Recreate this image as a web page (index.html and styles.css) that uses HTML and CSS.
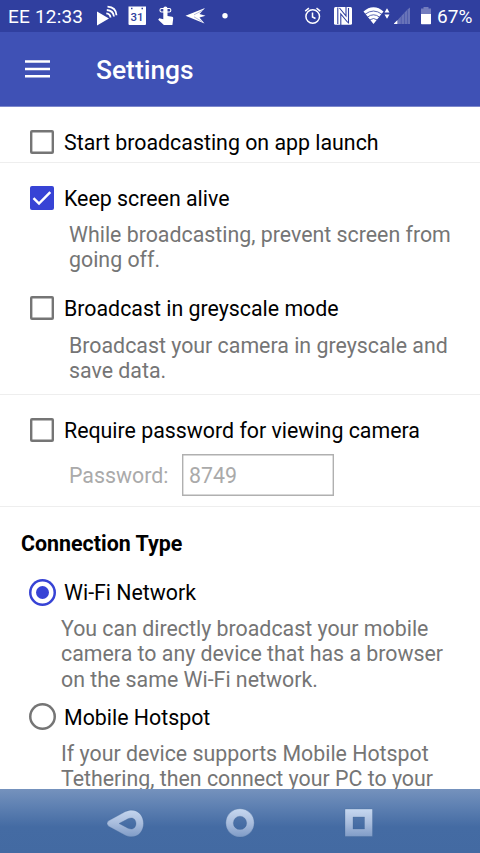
FILE: index.html
```html
<!DOCTYPE html>
<html lang="en">
<head>
<meta charset="utf-8">
<title>Settings</title>
<link rel="stylesheet" href="styles.css">
</head>
<body>
<div class="screen">
  <div class="status">
    <span class="clock">EE 12:33</span>
    <svg class="status-left" width="140" height="32" viewBox="92 0 140 32" fill="#fff">
      <path d="M97 11.500 109 18.500 97 25.500z"/>
      <g fill="none" stroke="#fff" stroke-width="1.800"><path d="M106.300 13.300q4 .5 4.200 4.200M106.800 10q6.500.5 7.200 6.500M107.500 6.700q8.500.5 9 8.500"/></g>
      <path d="M128.500 6.500H146v17.500q0 1-1 1h-15.500q-1 0-1-1z"/>
      <path fill="#303f9f" d="M131 7.800h1.500v1.500H131zM141.500 7.800h1.500v1.500h-1.500z"/>
      <text class="date" x="137" y="21.300" text-anchor="middle" fill="#303f9f">31</text>
      <path d="M163.300 8.500q0-2 2.100-2t2.100 2v7.500l4.700.8q1.200.3 1 1.700l-.8 6.500h-8.500l-5.700-5.300 1.100-1.500 4 1.100z"/>
      <rect x="160" y="8.500" width="10.800" height="3.500" rx="1.600" fill="none" stroke="#fff" stroke-width="1.100"/>
      <path d="M185.500 15.800 205 8l-5.500 6 6 1.800-6 1.800 5 6z"/>
      <path d="M194 14.800 203 10.200M194 16.800 202 21.500" stroke="#303f9f" stroke-width=".35"/>
      <circle cx="225" cy="15.800" r="2.700"/>
    </svg>
    <svg class="status-right" width="132" height="32" viewBox="302 0 132 32" fill="#fff">
      <g fill="none" stroke="#fff" stroke-width="1.500"><circle cx="312.700" cy="16.500" r="6.800"/><path d="M312.500 12.500v4.500l3 1.500M305.200 11.200l3.700-3M316.500 8.200l3.700 3"/></g>
      <path d="M335.500 7h15q1.500 0 1.500 1.500v14.800q0 1.500-1.500 1.500h-15q-1.500 0-1.500-1.500V8.500Q334 7 335.500 7z"/>
      <path d="M337.800 7.500v16.500M340.800 25V14l7 8.500M339.500 8l6.500 8V7M348.500 23.500V8" fill="none" stroke="#303f9f" stroke-width="1.100"/>
      <path d="M373.500 24 363.500 11.500Q368 7.200 373.500 7.200T383.500 11.500z"/>
      <path d="M365 14.300q8.500-6.500 17 0M367.300 17.200q6.200-4.800 12.400 0M369.500 20q4-3 8 0" fill="none" stroke="#303f9f" stroke-width=".8"/>
      <path d="M387 8.300l2.500 4.300h-5zM387 18.800l2.500-4.300h-5z"/>
      <path d="M394 24v-.5l3.500-3.500v4z"/>
      <path d="M398 19.500v4.500h2.900v-7.500zM401.300 16V24h2.700V13.200zM404.400 12.800V24h2.600V10zM407.400 9.600V24h2.600V7.500z" fill="#6873b8"/>
      <path d="M423.500 7h5v1.500h2.500V14h-10V8.500h2.500z" fill="#737dbe"/>
      <path d="M421 14h10v9.500q0 .7-.7.7h-8.600q-.7 0-.7-.7z"/>
    </svg>
    <span class="battery">67%</span>
  </div>
  <header class="appbar">
    <div class="menu"><svg width="25" height="18" viewBox="0 0 25 18"><path d="M0 1.500h25M0 9h25M0 16.300h25" stroke="#fff" stroke-width="2.600"/></svg></div>
    <h1>Settings</h1>
  </header>
  <main>
    <section class="first">
      <div class="row"><span class="box"></span><span class="label">Start broadcasting on app launch</span></div>
    </section>
    <section class="capture">
      <div class="row"><span class="box checked"><svg width="24" height="24" viewBox="0 0 24 24"><path d="M3.500 12.200 9 17.600 20.300 6.200" fill="none" stroke="#fff" stroke-width="2.500"/></svg></span><span class="label">Keep screen alive</span></div>
      <p class="desc">While broadcasting, prevent screen from<br>going off.</p>
      <div class="row second"><span class="box"></span><span class="label">Broadcast in greyscale mode</span></div>
      <p class="desc">Broadcast your camera in greyscale and<br>save data.</p>
    </section>
    <section class="security">
      <div class="row"><span class="box"></span><span class="label">Require password for viewing camera</span></div>
      <div class="password"><span class="caption">Password:</span><span class="field">8749</span></div>
    </section>
    <section class="connection">
      <h2>Connection Type</h2>
      <div class="row"><span class="radio on"></span><span class="label">Wi-Fi Network</span></div>
      <p class="desc wide">You can directly broadcast your mobile<br>camera to any device that has a browser<br>on the same Wi-Fi network.</p>
      <div class="row hotspot"><span class="radio"></span><span class="label">Mobile Hotspot</span></div>
      <p class="desc wide">If your device supports Mobile Hotspot<br>Tethering, then connect your PC to your</p>
    </section>
  </main>
  <nav>
    <svg width="480" height="64" viewBox="0 789 480 64">
      <defs><linearGradient id="metal" gradientUnits="userSpaceOnUse" x1="0" y1="809" x2="0" y2="837"><stop offset="0" stop-color="#c7d8f0"/><stop offset=".5" stop-color="#a9bddd"/><stop offset="1" stop-color="#7f9bc6"/></linearGradient></defs>
      <g fill="url(#metal)" fill-rule="evenodd" stroke="#3d6091" stroke-opacity=".45" stroke-width=".6">
        <path d="M108.500 820.800 125 811.800C135 807 143.500 813.500 143.500 823.500S135 840 125 835.200L108.500 826.200Q105.500 823.500 108.500 820.800zM119 823.500 128 828.300C133 830.500 136 827.500 136 823.500S133 816.500 128 818.700z"/>
        <path d="M240 808.700a14.200 14.200 0 1 1 0 28.400a14.200 14.200 0 1 1 0-28.400zM240 816.200a6.700 6.700 0 1 0 0 13.400a6.700 6.700 0 1 0 0-13.400z"/>
        <path d="M345.500 809h26.500q.5 0 .5.500v26.500q0 .5-.5.500h-26.500q-.5 0-.5-.5v-26.500q0-.5.500-.5zM353 817v12h11.500v-12z"/>
      </g>
    </svg>
  </nav>
</div>
</body>
</html>
```
FILE: styles.css
```css
* { box-sizing: border-box; }
body { margin: 0; background: #fff; font-family: Roboto, "Liberation Sans", sans-serif; }
h1, h2, p { margin: 0; }
svg { display: block; flex: none; }
.screen { width: 480px; height: 853px; display: flex; flex-direction: column; overflow: hidden; }
.status { height: 32px; flex: none; display: flex; align-items: center; background: #303f9f; color: #fff; font-size: 19px; line-height: 32px; white-space: nowrap; }
.clock { width: 92px; padding: 1px 0 0 8px; letter-spacing: .2px; }
.status-right { margin-left: 70px; }
.battery { padding: 1px 0 0 3px; letter-spacing: .1px; }
.date { font-size: 11.500px; font-weight: 500; }
.appbar { height: 75px; flex: none; display: flex; align-items: center; background: #3f51b5; color: #fff; border-bottom: 1px solid #7d88cb; }
.menu { width: 96px; padding-left: 25px; }
h1 { font-size: 26.400px; font-weight: 500; line-height: 34px; padding-top: 2px; }
main { height: 682px; flex: none; overflow: hidden; color: #000; font-size: 21.350px; }
section { border-bottom: 1px solid #eee; }
.first { padding: 17px 0 2px; }
.capture { padding: 17px 0 11px; }
.security { padding: 17px 0 10px; }
.connection { padding-top: 24px; border: 0; }
.row { height: 36px; display: flex; align-items: center; white-space: nowrap; }
.row.second { margin-top: 18px; }
.row.hotspot { margin-top: 7px; }
.box { width: 24px; height: 24px; margin: -1px 10px 0 30px; flex: none; box-shadow: inset 0 0 0 2.400px #757575; border-radius: 2px; }
.box.checked { box-shadow: none; margin-top: 0; background: #3743d5; }
.radio { width: 27px; height: 27px; margin: 0 8px 0 29px; flex: none; box-shadow: inset 0 0 0 2.500px #757575; border-radius: 50%; display: grid; place-items: center; }
.radio.on { box-shadow: inset 0 0 0 2.500px #3743d5; }
.radio.on::before { content: ""; width: 13px; height: 13px; border-radius: 50%; background: #3743d5; }
.label { line-height: 26px; padding-top: 2px; }
.row.second .label { padding-top: 0; }
.desc { margin: 6px 0 0 69px; line-height: 25.250px; color: #757575; white-space: nowrap; }
.desc.wide { margin-left: 61px; }
.password { display: flex; align-items: center; margin: 6px 0 0 69px; color: #aaa; }
.caption { width: 113px; }
.field { width: 152px; height: 42px; box-shadow: inset 0 0 0 1.400px #b0b0b0; padding-left: 7px; line-height: 43px; }
h2 { margin: 0 0 17px 21px; font-size: 21.400px; line-height: 26px; font-weight: 700; }
nav { height: 64px; flex: none; background: linear-gradient(#7592bd 0, #6082b3 16px, #446ba3 38px, #436aa2 100%); }
```
